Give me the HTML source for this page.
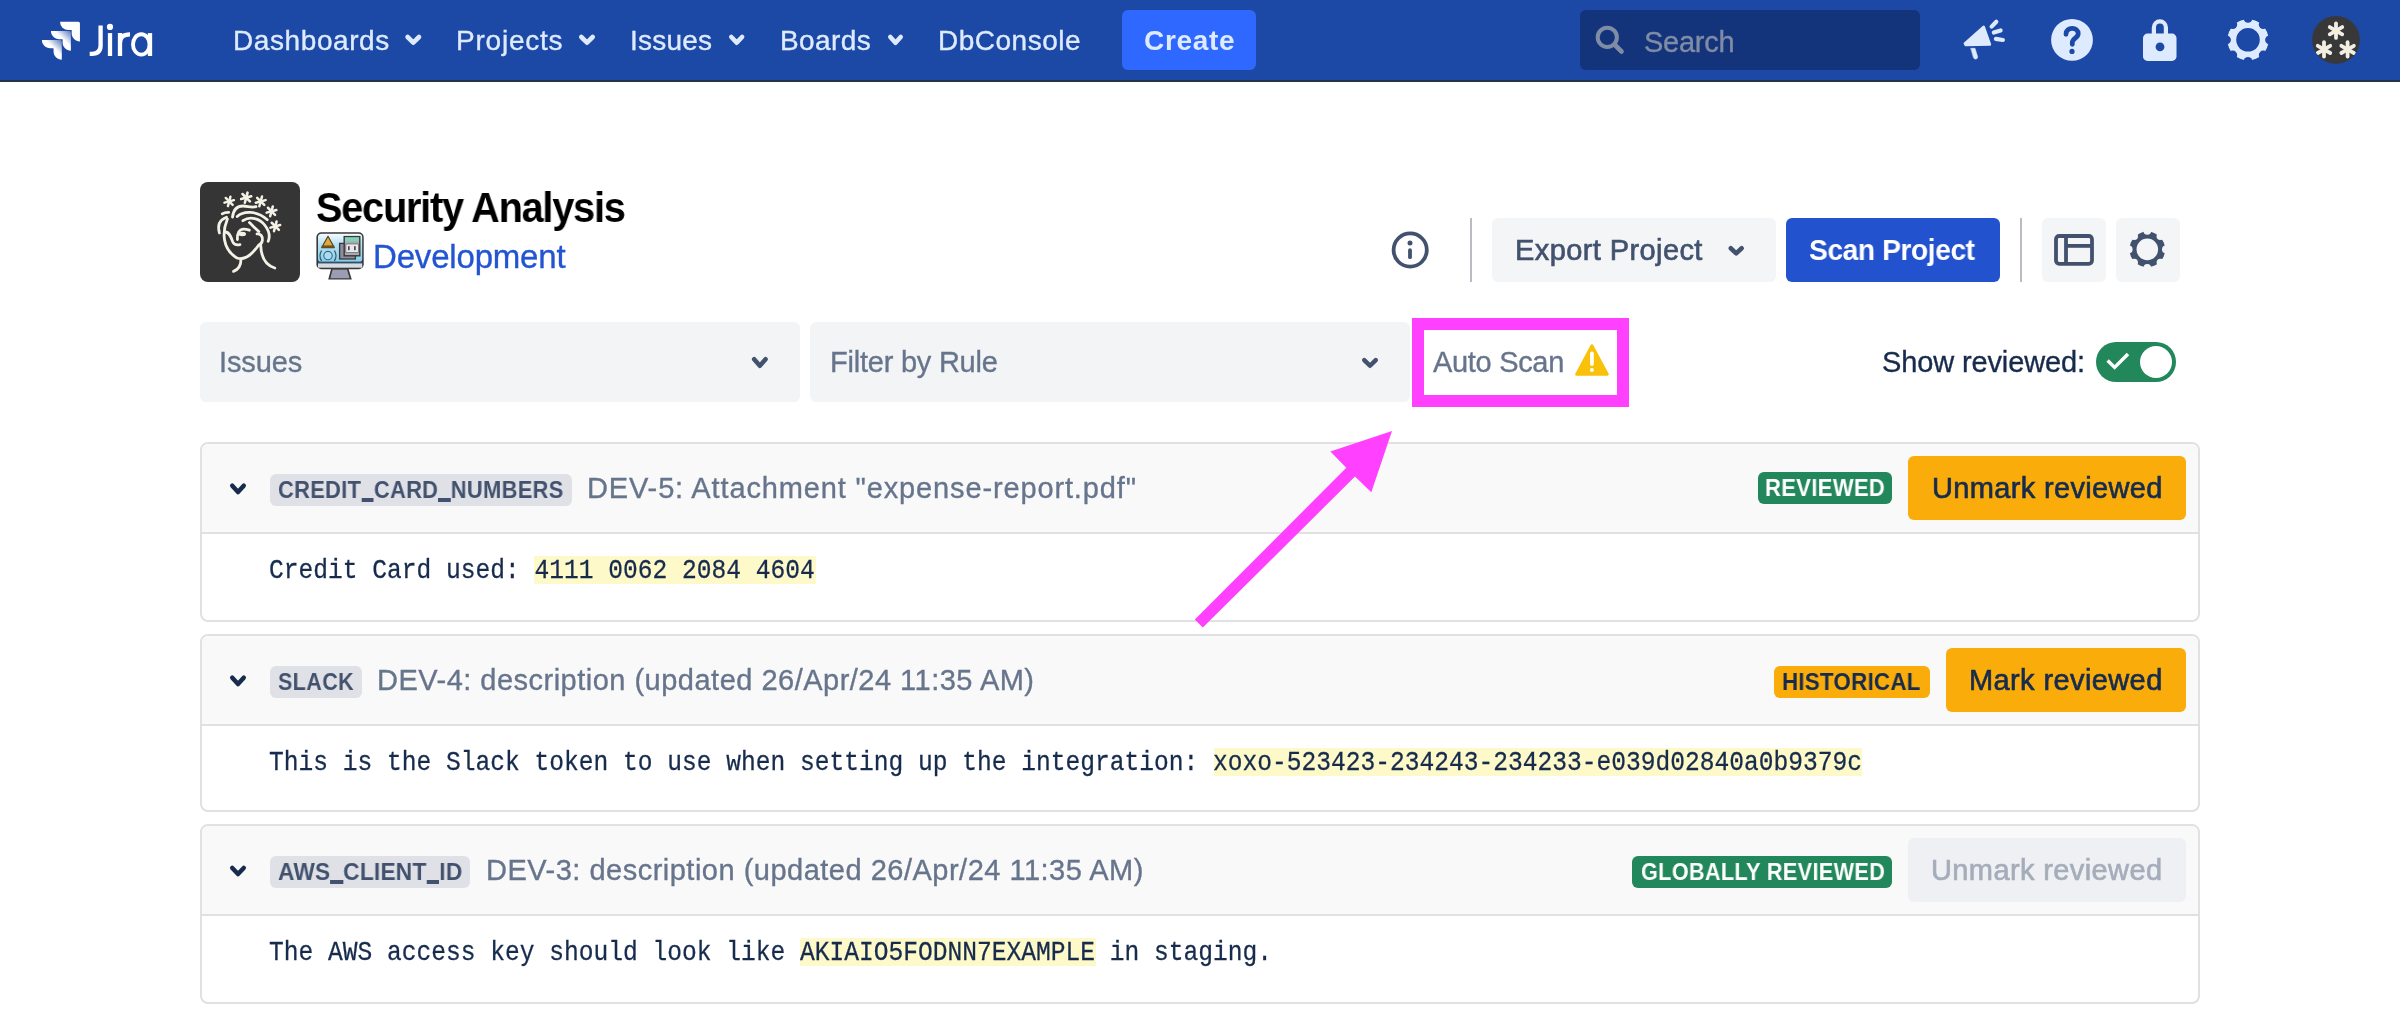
<!DOCTYPE html>
<html><head><meta charset="utf-8"><title>Security Analysis - Jira</title>
<style>
html,body{margin:0;padding:0;background:#fff;width:2400px;height:1012px;overflow:hidden}
body{position:relative;font-family:'Liberation Sans', sans-serif}
.b{position:absolute;box-sizing:content-box}
.t{position:absolute;white-space:pre;will-change:transform;font-family:'Liberation Sans', sans-serif}
.m{font-family:'Liberation Mono', monospace}
svg.ov{position:absolute;left:0;top:0}
</style></head><body>
<div class="b" style="left:0px;top:0px;width:2400px;height:80px;background:#1c48a6;border-radius:0px;"></div><div class="b" style="left:0px;top:80px;width:2400px;height:2px;background:#24324c;border-radius:0px;"></div><div class="b" style="left:1122px;top:10px;width:134px;height:60px;background:#2f68ff;border-radius:6px;"></div><div class="b" style="left:1580px;top:10px;width:340px;height:60px;background:#13347b;border-radius:6px;"></div><div class="b" style="left:200px;top:182px;width:100px;height:100px;background:#353535;border-radius:8px;"></div><div class="b" style="left:1470px;top:218px;width:2px;height:64px;background:#b9bcc2;border-radius:0px;"></div><div class="b" style="left:2020px;top:218px;width:2px;height:64px;background:#b9bcc2;border-radius:0px;"></div><div class="b" style="left:1492px;top:218px;width:284px;height:64px;background:#f4f5f7;border-radius:6px;"></div><div class="b" style="left:1786px;top:218px;width:214px;height:64px;background:#2352ce;border-radius:6px;"></div><div class="b" style="left:2042px;top:218px;width:64px;height:64px;background:#f4f5f7;border-radius:6px;"></div><div class="b" style="left:2116px;top:218px;width:64px;height:64px;background:#f4f5f7;border-radius:6px;"></div><div class="b" style="left:200px;top:322px;width:600px;height:80px;background:#f3f4f6;border-radius:6px;"></div><div class="b" style="left:810px;top:322px;width:600px;height:80px;background:#f3f4f6;border-radius:6px;"></div><div class="b" style="left:2096px;top:342px;width:80px;height:40px;background:#22875a;border-radius:20px;"></div><div class="b" style="left:2140px;top:346px;width:32px;height:32px;background:#ffffff;border-radius:16px;"></div><div class="b" style="left:200px;top:442px;width:1996px;height:176px;border:2px solid #e1e1e1;border-radius:8px;background:#fff;overflow:hidden"><div style="position:absolute;left:0;top:0;right:0;height:88px;background:#f9f9fa"></div><div style="position:absolute;left:0;top:88px;right:0;height:2px;background:#e1e1e1"></div></div><div class="b" style="left:200px;top:634px;width:1996px;height:174px;border:2px solid #e1e1e1;border-radius:8px;background:#fff;overflow:hidden"><div style="position:absolute;left:0;top:0;right:0;height:88px;background:#f9f9fa"></div><div style="position:absolute;left:0;top:88px;right:0;height:2px;background:#e1e1e1"></div></div><div class="b" style="left:200px;top:824px;width:1996px;height:176px;border:2px solid #e1e1e1;border-radius:8px;background:#fff;overflow:hidden"><div style="position:absolute;left:0;top:0;right:0;height:88px;background:#f9f9fa"></div><div style="position:absolute;left:0;top:88px;right:0;height:2px;background:#e1e1e1"></div></div><div class="b" style="left:270px;top:474px;width:302px;height:32px;background:#dfe1e6;border-radius:6px;"></div><div class="b" style="left:270px;top:666px;width:92px;height:32px;background:#dfe1e6;border-radius:6px;"></div><div class="b" style="left:270px;top:856px;width:200px;height:32px;background:#dfe1e6;border-radius:6px;"></div><div class="b" style="left:1758px;top:472px;width:134px;height:32px;background:#22875a;border-radius:6px;"></div><div class="b" style="left:1774px;top:666px;width:156px;height:32px;background:#f9ac0a;border-radius:6px;"></div><div class="b" style="left:1632px;top:856px;width:260px;height:32px;background:#22875a;border-radius:6px;"></div><div class="b" style="left:1908px;top:456px;width:278px;height:64px;background:#f9ac0a;border-radius:6px;"></div><div class="b" style="left:1946px;top:648px;width:240px;height:64px;background:#f9ac0a;border-radius:6px;"></div><div class="b" style="left:1908px;top:838px;width:278px;height:64px;background:#eff0f3;border-radius:6px;"></div><div class="b" style="left:534px;top:556px;width:282px;height:28px;background:#fdf9c9;border-radius:0px;"></div><div class="b" style="left:1214px;top:748px;width:648px;height:28px;background:#fdf9c9;border-radius:0px;"></div><div class="b" style="left:800px;top:938px;width:296px;height:28px;background:#fdf9c9;border-radius:0px;"></div><div class="t" style="left:233.00px;top:27.00px;font-size:28px;line-height:28px;color:#deebff;font-weight:400;letter-spacing:0.589px;-webkit-text-stroke:0.35px #deebff">Dashboards</div><div class="t" style="left:456.30px;top:27.00px;font-size:28px;line-height:28px;color:#deebff;font-weight:400;letter-spacing:0.771px;-webkit-text-stroke:0.35px #deebff">Projects</div><div class="t" style="left:630.40px;top:27.00px;font-size:28px;line-height:28px;color:#deebff;font-weight:400;letter-spacing:0.240px;-webkit-text-stroke:0.35px #deebff">Issues</div><div class="t" style="left:780.00px;top:27.00px;font-size:28px;line-height:28px;color:#deebff;font-weight:400;letter-spacing:0.400px;-webkit-text-stroke:0.35px #deebff">Boards</div><div class="t" style="left:938.00px;top:27.00px;font-size:28px;line-height:28px;color:#deebff;font-weight:400;letter-spacing:0.500px;-webkit-text-stroke:0.35px #deebff">DbConsole</div><div class="t" style="left:1143.50px;top:27.40px;font-size:28px;line-height:28px;color:#deebff;font-weight:700;letter-spacing:0.680px">Create</div><div class="t" style="left:1644.00px;top:28.20px;font-size:29px;line-height:29px;color:#808ca5;font-weight:400;letter-spacing:-0.260px;-webkit-text-stroke:0.35px #808ca5">Search</div><div class="t" style="left:316.06px;top:187.20px;font-size:42px;line-height:42px;color:#000000;font-weight:700;letter-spacing:-1.278px;transform:scaleX(0.9442);transform-origin:0 0">Security Analysis</div><div class="t" style="left:372.80px;top:239.80px;font-size:33px;line-height:33px;color:#2254d3;font-weight:400;letter-spacing:-0.180px;-webkit-text-stroke:0.35px #2254d3">Development</div><div class="t" style="left:1514.70px;top:236.00px;font-size:29px;line-height:29px;color:#42526e;font-weight:400;letter-spacing:0.408px;-webkit-text-stroke:0.65px #42526e">Export Project</div><div class="t" style="left:1808.93px;top:236.00px;font-size:29px;line-height:29px;color:#ffffff;font-weight:700;letter-spacing:-0.449px;transform:scaleX(0.9726);transform-origin:0 0">Scan Project</div><div class="t" style="left:218.50px;top:348.20px;font-size:29px;line-height:29px;color:#67758c;font-weight:400;letter-spacing:-0.120px;-webkit-text-stroke:0.35px #67758c">Issues</div><div class="t" style="left:829.80px;top:348.00px;font-size:29px;line-height:29px;color:#67758c;font-weight:400;letter-spacing:-0.231px;-webkit-text-stroke:0.35px #67758c">Filter by Rule</div><div class="t" style="left:1432.70px;top:348.00px;font-size:29px;line-height:29px;color:#67758c;font-weight:400;letter-spacing:-0.312px;-webkit-text-stroke:0.35px #67758c">Auto Scan</div><div class="t" style="left:1882.00px;top:348.00px;font-size:29px;line-height:29px;color:#172b4d;font-weight:400;letter-spacing:-0.131px;-webkit-text-stroke:0.35px #172b4d">Show reviewed:</div><div class="t" style="left:277.89px;top:478.00px;font-size:24px;line-height:24px;color:#42526e;font-weight:700;letter-spacing:0.390px;transform:scaleX(0.9092);transform-origin:0 0">CREDIT<span style="color:transparent;background:linear-gradient(to top,transparent 1.4px,#42526e 1.4px,#42526e 5px,transparent 5px)">_</span>CARD<span style="color:transparent;background:linear-gradient(to top,transparent 1.4px,#42526e 1.4px,#42526e 5px,transparent 5px)">_</span>NUMBERS</div><div class="t" style="left:587.00px;top:474.20px;font-size:29px;line-height:29px;color:#67758c;font-weight:400;letter-spacing:0.862px;-webkit-text-stroke:0.35px #67758c">DEV-5: Attachment &quot;expense-report.pdf&quot;</div><div class="t" style="left:1764.57px;top:476.20px;font-size:24px;line-height:24px;color:#ffffff;font-weight:700;letter-spacing:0.374px;transform:scaleX(0.9168);transform-origin:0 0">REVIEWED</div><div class="t" style="left:1931.90px;top:474.20px;font-size:29px;line-height:29px;color:#172b4d;font-weight:400;letter-spacing:0.343px;-webkit-text-stroke:0.65px #172b4d">Unmark reviewed</div><div class="t" style="left:277.91px;top:670.20px;font-size:24px;line-height:24px;color:#42526e;font-weight:700;letter-spacing:0.572px;transform:scaleX(0.8909);transform-origin:0 0">SLACK</div><div class="t" style="left:377.20px;top:666.20px;font-size:29px;line-height:29px;color:#67758c;font-weight:400;letter-spacing:0.487px;-webkit-text-stroke:0.35px #67758c">DEV-4: description (updated 26/Apr/24 11:35 AM)</div><div class="t" style="left:1782.14px;top:670.25px;font-size:24px;line-height:24px;color:#172b4d;font-weight:700;letter-spacing:0.276px;transform:scaleX(0.9305);transform-origin:0 0">HISTORICAL</div><div class="t" style="left:1969.00px;top:666.25px;font-size:29px;line-height:29px;color:#172b4d;font-weight:400;letter-spacing:0.392px;-webkit-text-stroke:0.65px #172b4d">Mark reviewed</div><div class="t" style="left:277.80px;top:860.25px;font-size:24px;line-height:24px;color:#42526e;font-weight:700;letter-spacing:0.205px;transform:scaleX(0.9470);transform-origin:0 0">AWS<span style="color:transparent;background:linear-gradient(to top,transparent 1.4px,#42526e 1.4px,#42526e 5px,transparent 5px)">_</span>CLIENT<span style="color:transparent;background:linear-gradient(to top,transparent 1.4px,#42526e 1.4px,#42526e 5px,transparent 5px)">_</span>ID</div><div class="t" style="left:485.50px;top:856.25px;font-size:29px;line-height:29px;color:#67758c;font-weight:400;letter-spacing:0.496px;-webkit-text-stroke:0.35px #67758c">DEV-3: description (updated 26/Apr/24 11:35 AM)</div><div class="t" style="left:1640.70px;top:860.25px;font-size:24px;line-height:24px;color:#ffffff;font-weight:700;letter-spacing:0.419px;transform:scaleX(0.9003);transform-origin:0 0">GLOBALLY REVIEWED</div><div class="t" style="left:1931.40px;top:856.25px;font-size:29px;line-height:29px;color:#a5adba;font-weight:400;letter-spacing:0.386px;-webkit-text-stroke:0.65px #a5adba">Unmark reviewed</div><div class="t m" style="left:269px;top:558.8px;font-size:24.58px;line-height:25px;color:#172b4d;-webkit-text-stroke:0.25px #172b4d;transform:scaleY(1.13);transform-origin:0 19px">Credit Card used: 4111 0062 2084 4604</div><div class="t m" style="left:269px;top:751.25px;font-size:24.58px;line-height:25px;color:#172b4d;-webkit-text-stroke:0.25px #172b4d;transform:scaleY(1.13);transform-origin:0 19px">This is the Slack token to use when setting up the integration: xoxo-523423-234243-234233-e039d02840a0b9379c</div><div class="t m" style="left:269px;top:940.8px;font-size:24.58px;line-height:25px;color:#172b4d;-webkit-text-stroke:0.25px #172b4d;transform:scaleY(1.13);transform-origin:0 19px">The AWS access key should look like AKIAIO5FODNN7EXAMPLE in staging.</div>
<svg class="ov" width="2400" height="1012" viewBox="0 0 2400 1012">
<polyline points="407.60,37.00 413.30,42.70 419.00,37.00" fill="none" stroke="#deebff" stroke-width="4.6" stroke-linecap="round" stroke-linejoin="round"/><polyline points="581.30,37.00 587.00,42.70 592.70,37.00" fill="none" stroke="#deebff" stroke-width="4.6" stroke-linecap="round" stroke-linejoin="round"/><polyline points="731.30,37.00 736.70,42.70 742.10,37.00" fill="none" stroke="#deebff" stroke-width="4.6" stroke-linecap="round" stroke-linejoin="round"/><polyline points="890.30,37.00 895.50,42.70 900.70,37.00" fill="none" stroke="#deebff" stroke-width="4.6" stroke-linecap="round" stroke-linejoin="round"/><polyline points="232.25,485.75 238.00,492.05 243.75,485.75" fill="none" stroke="#172b4d" stroke-width="4.5" stroke-linecap="round" stroke-linejoin="round"/><polyline points="232.25,677.75 238.00,684.05 243.75,677.75" fill="none" stroke="#172b4d" stroke-width="4.5" stroke-linecap="round" stroke-linejoin="round"/><polyline points="232.25,867.95 238.00,874.05 243.75,867.95" fill="none" stroke="#172b4d" stroke-width="4.5" stroke-linecap="round" stroke-linejoin="round"/><polyline points="754.15,359.25 759.85,365.75 765.55,359.25" fill="none" stroke="#42526e" stroke-width="4.5" stroke-linecap="round" stroke-linejoin="round"/><polyline points="1364.25,360.05 1370.00,365.75 1375.75,360.05" fill="none" stroke="#42526e" stroke-width="4.5" stroke-linecap="round" stroke-linejoin="round"/><polyline points="1730.75,248.25 1736.20,253.45 1741.65,248.25" fill="none" stroke="#42526e" stroke-width="4.5" stroke-linecap="round" stroke-linejoin="round"/>
<defs>
<linearGradient id="jg1" gradientUnits="userSpaceOnUse" x1="192" y1="64" x2="142" y2="116"><stop offset="0" stop-color="#fff" stop-opacity="0.3"/><stop offset="1" stop-color="#fff"/></linearGradient>
<linearGradient id="jg2" gradientUnits="userSpaceOnUse" x1="131" y1="125" x2="81" y2="177"><stop offset="0" stop-color="#fff" stop-opacity="0.3"/><stop offset="1" stop-color="#fff"/></linearGradient>
<linearGradient id="scr" x1="0" y1="0" x2="0" y2="1"><stop offset="0" stop-color="#f4fbff"/><stop offset="0.35" stop-color="#b9e3f6"/><stop offset="1" stop-color="#86cdee"/></linearGradient>
<mask id="gearNav"><rect x="2220" y="10" width="60" height="60" fill="#000"/><circle cx="2248" cy="39.8" r="20.6" fill="#fff"/><g fill="#000"><circle cx="2248" cy="18.3" r="4.4"/><circle cx="2248" cy="61.3" r="4.4"/><circle cx="2226.5" cy="39.8" r="4.4"/><circle cx="2269.5" cy="39.8" r="4.4"/><circle cx="2232.8" cy="24.6" r="4.4"/><circle cx="2263.2" cy="24.6" r="4.4"/><circle cx="2232.8" cy="55" r="4.4"/><circle cx="2263.2" cy="55" r="4.4"/></g><circle cx="2248" cy="39.8" r="11.8" fill="#000"/></mask>
<mask id="gearHdr"><rect x="2120" y="220" width="60" height="60" fill="#000"/><circle cx="2147.3" cy="249.4" r="17.8" fill="#fff"/><g fill="#000"><circle cx="2147.3" cy="230.9" r="3.8"/><circle cx="2147.3" cy="267.9" r="3.8"/><circle cx="2128.8" cy="249.4" r="3.8"/><circle cx="2165.8" cy="249.4" r="3.8"/><circle cx="2134.2" cy="236.3" r="3.8"/><circle cx="2160.4" cy="236.3" r="3.8"/><circle cx="2134.2" cy="262.5" r="3.8"/><circle cx="2160.4" cy="262.5" r="3.8"/></g><circle cx="2147.3" cy="249.4" r="10.8" fill="#000"/></mask>
<clipPath id="avClip"><circle cx="2336" cy="39.8" r="23.9"/></clipPath>
<symbol id="ast" viewBox="-10 -10 20 20" overflow="visible"><g stroke-linecap="round"><line x1="0" y1="-8" x2="0" y2="8"/><line x1="-6.93" y1="-4" x2="6.93" y2="4"/><line x1="-6.93" y1="4" x2="6.93" y2="-4"/></g></symbol>
<symbol id="ast2" viewBox="-10 -10 20 20" overflow="visible"><g stroke-linecap="round"><line x1="2.07" y1="-7.73" x2="-2.07" y2="7.73"/><line x1="-5.66" y1="-5.66" x2="5.66" y2="5.66"/><line x1="-7.73" y1="2.07" x2="7.73" y2="-2.07"/></g></symbol>
</defs>

<!-- Jira logo -->
<g transform="translate(41.9,21.8) scale(0.1490)">
<path fill="#fff" d="M244.658 0H121.707a55.502 55.502 0 0 0 55.502 55.502h22.649V77.37c.02 30.625 24.841 55.447 55.466 55.467V10.666C255.324 4.777 250.55.001 244.658 0z"/>
<path fill="url(#jg1)" d="M183.822 61.262H60.872c.019 30.625 24.84 55.447 55.466 55.467h22.649v21.938c.039 30.625 24.877 55.43 55.502 55.43V71.93c0-5.891-4.776-10.667-10.667-10.667z"/>
<path fill="url(#jg2)" d="M122.951 122.489H0c0 30.653 24.85 55.502 55.502 55.502h22.72v21.867c.02 30.597 24.798 55.408 55.396 55.466V133.156c0-5.891-4.776-10.667-10.667-10.667z"/>
</g>
<!-- Jira wordmark -->
<g fill="none" stroke="#fff" stroke-width="4.3">
<path d="M100.6,25.6 V45.5 C100.6,51 97.5,53.8 92,53.8 H89.7"/>
<path d="M110,33.1 V56"/>
<path d="M120,33.1 V56 M120,43 C120,37 123.5,34.4 130,34.4"/>
<ellipse cx="141.3" cy="44.4" rx="8.3" ry="10.2" stroke-width="3.9"/>
<path d="M150,33.1 V56"/>
</g>
<circle cx="110" cy="26.9" r="3.1" fill="#fff"/>

<!-- search icon -->
<circle cx="1607.3" cy="37.3" r="9.6" fill="none" stroke="#808ca5" stroke-width="4"/>
<line x1="1615" y1="45" x2="1621.5" y2="51.5" stroke="#808ca5" stroke-width="4.6" stroke-linecap="round"/>

<!-- megaphone -->
<g fill="#deebff" stroke="#deebff" stroke-linejoin="round" stroke-linecap="round">
<path d="M1965,43.5 L1983.6,27 L1989.8,44.4 L1965.9,44.9 Z" stroke-width="2.8"/>
<path d="M1970.9,48.3 L1975,48.3 L1977.7,56.7 A2.2,2.2 0 0 1 1973.6,58 Z" stroke-width="0.5"/>
<line x1="1991.6" y1="26.6" x2="1996.3" y2="21.8" stroke-width="4.2"/>
<line x1="1993.8" y1="32.5" x2="2000.6" y2="30.4" stroke-width="4.2"/>
<line x1="1995.9" y1="38.9" x2="2002.9" y2="40" stroke-width="4.2"/>
</g>
<!-- help -->
<circle cx="2072" cy="39.9" r="20.9" fill="#deebff"/>
<path d="M2066,34.3 C2066,30.3 2068.8,28.4 2072.2,28.4 C2075.6,28.4 2078.2,30.6 2078.2,33.8 C2078.2,37.8 2072.3,38.6 2072.3,42.6 V44.3" fill="none" stroke="#1c48a6" stroke-width="4.8" stroke-linecap="round"/>
<circle cx="2072" cy="51.4" r="2.6" fill="#1c48a6"/>
<!-- lock -->
<path d="M2153.9,34.5 V27.4 A6,6 0 0 1 2165.9,27.4 V34.5" fill="none" stroke="#deebff" stroke-width="4.2"/>
<rect x="2143" y="33.6" width="33.5" height="27.3" rx="4.5" fill="#deebff"/>
<circle cx="2160" cy="46.8" r="4.4" fill="#1c48a6"/>
<!-- gear nav -->
<rect x="2220" y="10" width="60" height="60" fill="#deebff" mask="url(#gearNav)"/>
<!-- avatar nav -->
<circle cx="2336" cy="39.8" r="23.9" fill="#383838"/>
<g clip-path="url(#avClip)" stroke="#f2efe2" stroke-width="4.2">
<use href="#ast" x="2327" y="21.7" width="18" height="18"/>
<use href="#ast" x="2315" y="40.4" width="18" height="18"/>
<use href="#ast" x="2338.6" y="40.4" width="18" height="18"/>
</g>

<!-- project avatar face -->
<g stroke="#f4f2e6" fill="none" stroke-width="2.8" stroke-linecap="round">
<use href="#ast2" x="223.1" y="195.3" width="12.2" height="12.2" stroke-width="4.0"/>
<use href="#ast2" x="239.7" y="191.2" width="13" height="13" stroke-width="4.0"/>
<use href="#ast2" x="254.4" y="195.1" width="12.6" height="12.6" stroke-width="4.0"/>
<use href="#ast2" x="265.2" y="205" width="12.6" height="12.6" stroke-width="4.0"/>
<use href="#ast2" x="269" y="220" width="12.6" height="12.6" stroke-width="4.0"/>
<path d="M232.5,217 C233.5,209 238,206 243,206 C248,206 251,208 256,206.6"/>
<path d="M222.2,213.8 C224,212.6 226.5,212.2 228.8,212.3"/>
<path d="M237.2,216.5 C243,211 256,210 267.3,219.7"/>
<path d="M219.4,233 C217.5,226 219,220 226.5,217.2"/>
<path d="M227.4,219 C222,232 222,249 237,258 C245,261 253,253 258,246"/>
<path d="M241,259 C241,265.5 238.5,269.5 233.5,271.4"/>
<path d="M260.7,245 C261,256 265,265 274.8,268"/>
<path d="M242.9,220.7 C250,216 260,218 265.4,226 C269,231 270,237 268.2,241.3"/>
<path d="M249.4,222.6 C253,226 256,229 258.8,231.5"/>
<path d="M257,233.8 C260.5,233.5 263,236.5 262.4,240.2 C262,242.8 260.5,244.4 258.8,245.1"/>
<path d="M237.4,239.5 C237,233 239.5,229.5 243,229.2 C245.5,229 247.5,229.6 249.4,230.2"/>
<path d="M225,232 C229.5,232 231,237 232.8,242 C234,244.8 236.5,245.2 240,244.6"/>
</g>
<ellipse cx="242.2" cy="234" rx="3.8" ry="2.2" fill="#f4f2e6"/>

<!-- monitor icon -->
<g>
<path d="M331.2,268.6 L348.4,268.6 L351.8,279.6 L328.2,279.6 Z" fill="#383838"/>
<path d="M332.6,269.5 L347,269.5 L349.6,278.2 L330.4,278.2 Z" fill="#9b9eb2"/>
<rect x="316.4" y="232.2" width="47.3" height="37" rx="5" fill="#383838"/>
<rect x="318" y="233.7" width="44.2" height="28.6" rx="3.5" fill="url(#scr)"/>
<rect x="318" y="261.6" width="44.2" height="1.8" fill="#2d5266"/>
<rect x="318" y="263.4" width="44.2" height="4.3" fill="#d7dbe4"/>
<path d="M328,236.3 L334.3,247.6 L321.7,247.6 Z" fill="#e0a83a" stroke="#4a3b1e" stroke-width="1.1" stroke-linejoin="round"/>
<rect x="321.8" y="245.4" width="12.4" height="2.4" fill="#6b5222"/>
<circle cx="328" cy="255.6" r="4.2" fill="#a8dcf3" stroke="#3d6a80" stroke-width="1.1"/>
<path d="M321.6,250.5 C319.6,253.5 319.6,258 321.6,261 M334.4,250.5 C336.4,253.5 336.4,258 334.4,261" fill="none" stroke="#2f5568" stroke-width="1.3"/>
<rect x="339.6" y="243.4" width="15.8" height="15.6" fill="#8b8d9c" stroke="#3a3a3a" stroke-width="1.3"/>
<rect x="344.2" y="236.6" width="15.6" height="19.2" fill="#a6a8b4" stroke="#383838" stroke-width="1.4"/>
<rect x="345" y="237.4" width="14" height="4.2" fill="#7fd3b4"/>
<rect x="345.9" y="244" width="12.4" height="8.4" fill="#e8e8ec" stroke="#555" stroke-width="0.6"/>
<rect x="348" y="246.2" width="1.7" height="4" fill="#4a4a4a"/><rect x="354" y="246.2" width="1.7" height="4" fill="#4a4a4a"/>
</g>

<!-- info icon -->
<circle cx="1410.2" cy="250" r="16.6" fill="none" stroke="#42526e" stroke-width="3.8"/>
<circle cx="1410" cy="243" r="2.5" fill="#42526e"/>
<line x1="1410" y1="250.2" x2="1410" y2="257.2" stroke="#42526e" stroke-width="3.8" stroke-linecap="round"/>

<!-- panel icon -->
<g fill="none" stroke="#42526e" stroke-width="3.8">
<rect x="2056" y="236" width="36" height="27.8" rx="3.2"/>
<line x1="2066" y1="236" x2="2066" y2="263.8"/>
<line x1="2066" y1="245.9" x2="2092" y2="245.9"/>
</g>
<!-- gear header -->
<rect x="2120" y="220" width="60" height="60" fill="#42526e" mask="url(#gearHdr)"/>

<!-- warning -->
<path d="M1591.9,346 L1607.2,374.2 L1576.8,374.2 Z" fill="#f9c10a" stroke="#f9c10a" stroke-width="3.2" stroke-linejoin="round"/>
<line x1="1591.9" y1="353.5" x2="1591.9" y2="364" stroke="#fff" stroke-width="3.8" stroke-linecap="round"/>
<circle cx="1591.9" cy="370" r="2" fill="#fff"/>

<!-- toggle check -->
<polyline points="2107.6,360.6 2114.6,367.4 2128,354" fill="none" stroke="#fff" stroke-width="3.5" stroke-linecap="butt" stroke-linejoin="miter"/>

<!-- annotation -->
<rect x="1418" y="324" width="205" height="77" fill="none" stroke="#ff40ff" stroke-width="12"/>
<polygon points="1194.8,619.6 1346.3,467.8 1330.4,451.5 1392,430.9 1371.3,492.2 1355,476.5 1202.8,627.6" fill="#ff40ff"/>

</svg>
</body></html>
